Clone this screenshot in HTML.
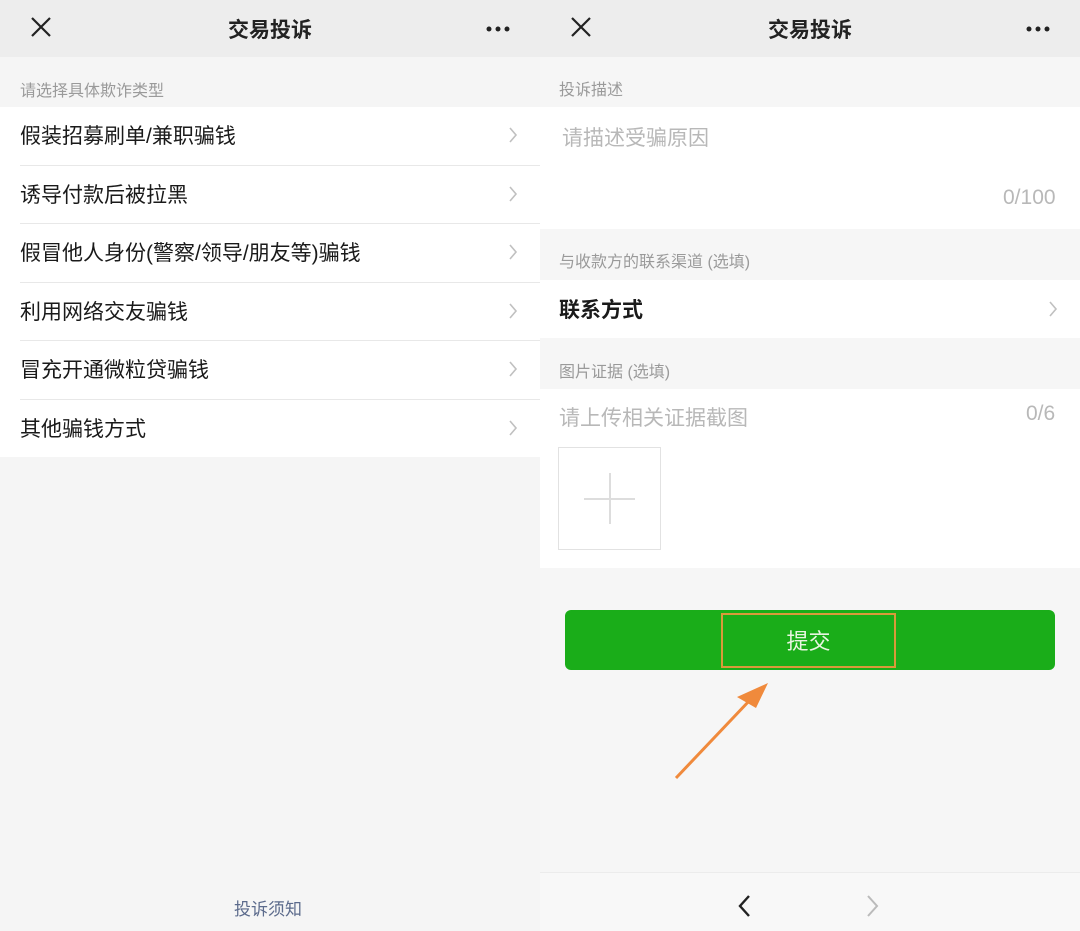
<!DOCTYPE html>
<html><head><meta charset="utf-8"><style>
*{margin:0;padding:0;box-sizing:border-box}
body{width:1080px;height:931px;overflow:hidden;background:#f5f5f5;font-family:"Liberation Sans","Noto Sans CJK SC",sans-serif;position:relative}
.a{position:absolute}
.hdr{top:0;height:57px;width:540px;background:#ededed}
.t{position:absolute;left:0;width:540px;top:14px;text-align:center;font-size:21px;color:#222;font-weight:600}
.x{position:absolute;left:30px;top:16px}
.dots{position:absolute;left:486px;top:26px}
.w{background:#fff}
.lbl{font-size:16px;color:#9a9a9a}
.row{position:absolute;left:0;width:540px;height:58.5px;background:#fff}
.row span{position:absolute;left:20px;top:13px;font-size:21px;color:#1a1a1a}
.row:after{content:"";position:absolute;left:20px;right:0;bottom:0;height:1px;background:#e8e8e8}
.row.last:after{display:none}
.row svg{position:absolute;left:508px;top:20px}
</style></head><body>
<!-- left -->
<div class="a hdr" style="left:0"><svg class="x" width="22" height="22" viewBox="0 0 22 22"><path d="M2 2L20 20M20 2L2 20" stroke="#222" stroke-width="2.2"/></svg><div class="t">交易投诉</div><svg class="dots" width="24" height="6"><circle cx="3" cy="3" r="2.5" fill="#222"/><circle cx="12" cy="3" r="2.5" fill="#222"/><circle cx="21" cy="3" r="2.5" fill="#222"/></svg></div>
<div class="a lbl" style="left:20px;top:77px">请选择具体欺诈类型</div>
<div class="row" style="top:107px"><span>假装招募刷单/兼职骗钱</span><svg width="10" height="16"><path d="M2 1L8 8L2 15" fill="none" stroke="#c0c0c0" stroke-width="1.6"/></svg></div>
<div class="row" style="top:165.5px"><span>诱导付款后被拉黑</span><svg width="10" height="16"><path d="M2 1L8 8L2 15" fill="none" stroke="#c0c0c0" stroke-width="1.6"/></svg></div>
<div class="row" style="top:224px"><span>假冒他人身份(警察/领导/朋友等)骗钱</span><svg width="10" height="16"><path d="M2 1L8 8L2 15" fill="none" stroke="#c0c0c0" stroke-width="1.6"/></svg></div>
<div class="row" style="top:282.5px"><span>利用网络交友骗钱</span><svg width="10" height="16"><path d="M2 1L8 8L2 15" fill="none" stroke="#c0c0c0" stroke-width="1.6"/></svg></div>
<div class="row" style="top:341px"><span>冒充开通微粒贷骗钱</span><svg width="10" height="16"><path d="M2 1L8 8L2 15" fill="none" stroke="#c0c0c0" stroke-width="1.6"/></svg></div>
<div class="row last" style="top:399.5px;height:57px"><span>其他骗钱方式</span><svg width="10" height="16"><path d="M2 1L8 8L2 15" fill="none" stroke="#c0c0c0" stroke-width="1.6"/></svg></div>
<div class="a" style="left:-2px;width:540px;top:895px;text-align:center;font-size:17px;color:#5c6b8c">投诉须知</div>
<!-- right -->
<div class="a" style="left:540px;top:0;width:540px;height:931px;background:#f6f6f6"></div>
<div class="a hdr" style="left:540px"><svg class="x" width="22" height="22" viewBox="0 0 22 22"><path d="M2 2L20 20M20 2L2 20" stroke="#222" stroke-width="2.2"/></svg><div class="t">交易投诉</div><svg class="dots" width="24" height="6"><circle cx="3" cy="3" r="2.5" fill="#222"/><circle cx="12" cy="3" r="2.5" fill="#222"/><circle cx="21" cy="3" r="2.5" fill="#222"/></svg></div>
<div class="a lbl" style="left:559px;top:76px">投诉描述</div>
<div class="a w" style="left:540px;top:107px;width:540px;height:122px"></div>
<div class="a" style="left:562px;top:122px;font-size:21px;color:#b8b8b8">请描述受骗原因</div>
<div class="a" style="left:1003px;top:186px;font-size:21px;color:#b8b8b8">0/100</div>
<div class="a lbl" style="left:559px;top:248px">与收款方的联系渠道 (选填)</div>
<div class="a w" style="left:540px;top:280px;width:540px;height:58px"></div>
<div class="a" style="left:559px;top:294px;font-size:21px;color:#1a1a1a;font-weight:bold">联系方式</div>
<svg class="a" style="left:1048px;top:301px" width="10" height="16"><path d="M2 1L8 8L2 15" fill="none" stroke="#c0c0c0" stroke-width="1.6"/></svg>
<div class="a lbl" style="left:559px;top:358px">图片证据 (选填)</div>
<div class="a w" style="left:540px;top:389px;width:540px;height:179px"></div>
<div class="a" style="left:559px;top:402px;font-size:21px;color:#b8b8b8">请上传相关证据截图</div>
<div class="a" style="left:1026px;top:402px;font-size:21px;color:#b8b8b8">0/6</div>
<div class="a" style="left:558px;top:447px;width:103px;height:103px;border:1px solid #e2e2e2"></div>
<div class="a" style="left:584px;top:498px;width:51px;height:2px;background:#ddd"></div>
<div class="a" style="left:609px;top:473px;width:2px;height:51px;background:#ddd"></div>
<div class="a" style="left:565px;top:610px;width:490px;height:60px;background:#1aad19;border-radius:6px"></div>
<div class="a" style="left:721px;top:613px;width:175px;height:55px;border:2px solid #d99a3a"></div>
<div class="a" style="left:721px;top:624px;width:175px;text-align:center;font-size:22px;color:#e8f5e0">提交</div>
<svg class="a" style="left:540px;top:560px" width="540" height="371"><path d="M136 218L210 140" stroke="#f08a3c" stroke-width="3"/><path d="M228 123L197 137L216 148Z" fill="#f08a3c"/></svg>
<div class="a" style="left:540px;top:872px;width:540px;height:59px;background:#f8f8f8;border-top:1px solid #ececec"></div>
<svg class="a" style="left:737px;top:894px" width="14" height="24"><path d="M12 2L3 12L12 22" fill="none" stroke="#222" stroke-width="2.4"/></svg>
<svg class="a" style="left:866px;top:894px" width="14" height="24"><path d="M2 2L11 12L2 22" fill="none" stroke="#bbb" stroke-width="2"/></svg>
</body></html>
